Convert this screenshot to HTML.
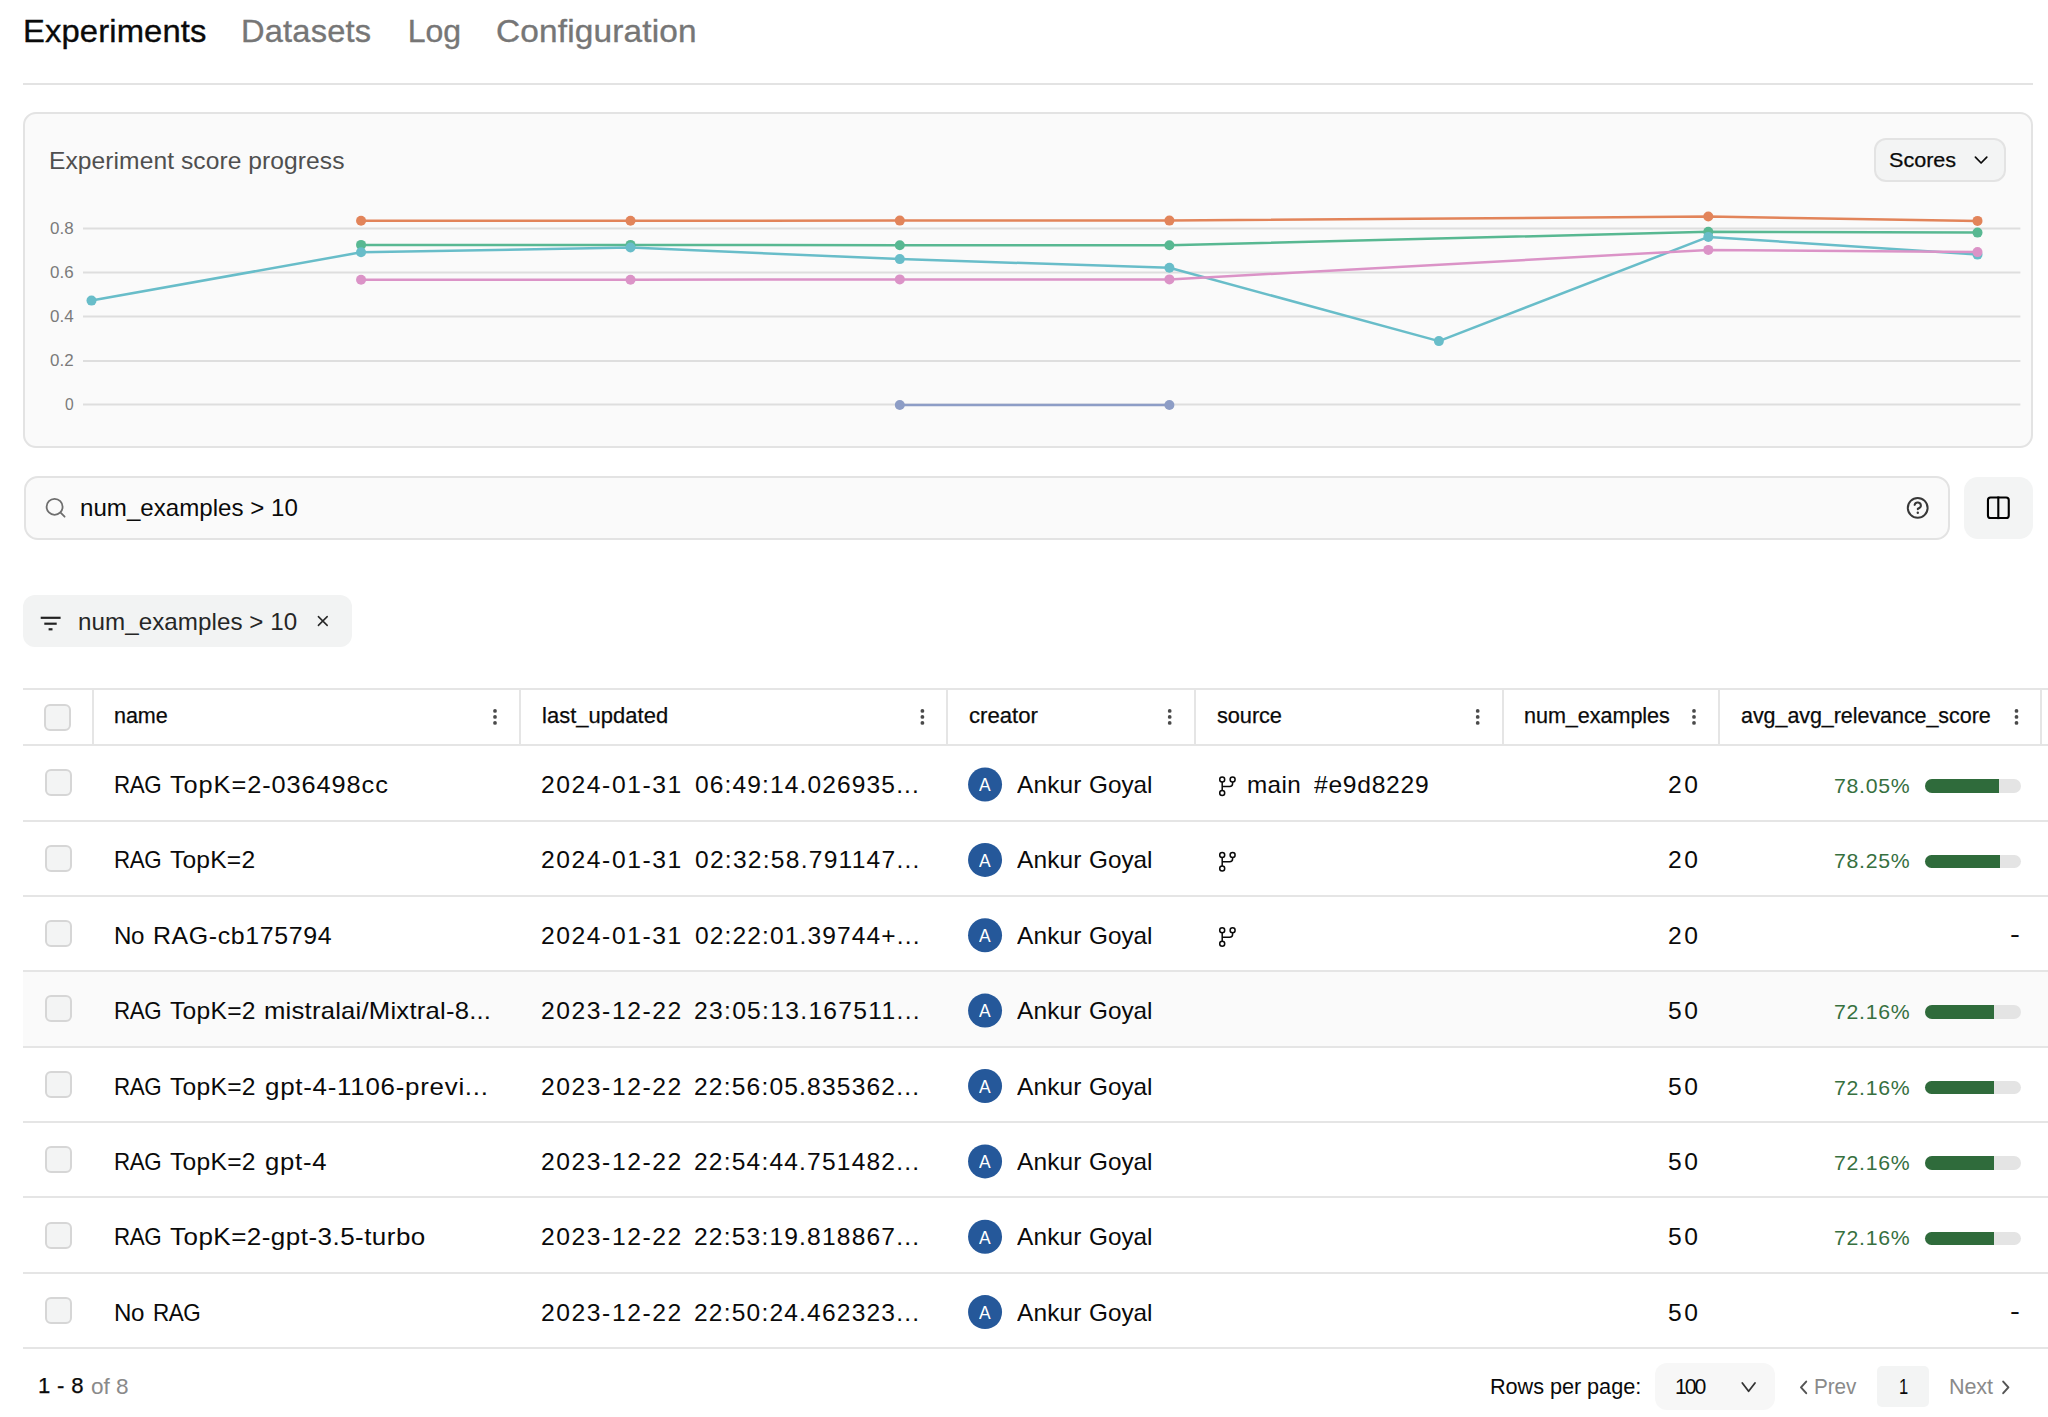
<!DOCTYPE html><html><head><meta charset="utf-8"><style>
html,body{margin:0;padding:0;background:#fff;width:2048px;height:1417px;overflow:hidden;position:relative}
.t{position:absolute;white-space:pre;font-family:'Liberation Sans',sans-serif}
div{box-sizing:border-box}
</style></head><body>
<div style="position:absolute;left:23px;top:83px;width:2010px;height:2px;background:#e3e3e3"></div>
<div style="position:absolute;left:23px;top:112px;width:2010px;height:335.5px;border:2px solid #e3e3e3;border-radius:13px;background:#fafafa"></div>
<div style="position:absolute;left:1873.7px;top:138.2px;width:132.8px;height:43.5px;border:2px solid #e3e3e3;border-radius:12px;background:#f3f4f4"></div>
<div style="position:absolute;left:23.5px;top:475.5px;width:1926.5px;height:64.7px;border:2px solid #e3e3e3;border-radius:14px;background:#fafafa"></div>
<div style="position:absolute;left:1964px;top:477px;width:68.5px;height:61.7px;border-radius:14px;background:#f3f4f4"></div>
<div style="position:absolute;left:23.2px;top:595px;width:328.6px;height:51.8px;border-radius:12px;background:#f2f3f3"></div>
<div style="position:absolute;left:23px;top:971.325px;width:2025px;height:75.38px;background:#fafafa"></div>
<div style="position:absolute;left:23px;top:687.6px;width:2025px;height:2.0px;background:#e5e5e5"></div>
<div style="position:absolute;left:23px;top:744.2px;width:2025px;height:2.0px;background:#e5e5e5"></div>
<div style="position:absolute;left:23px;top:819.58px;width:2025px;height:2.0px;background:#e5e5e5"></div>
<div style="position:absolute;left:23px;top:894.95px;width:2025px;height:2.0px;background:#e5e5e5"></div>
<div style="position:absolute;left:23px;top:970.33px;width:2025px;height:2.0px;background:#e5e5e5"></div>
<div style="position:absolute;left:23px;top:1045.7px;width:2025px;height:2.0px;background:#e5e5e5"></div>
<div style="position:absolute;left:23px;top:1121.08px;width:2025px;height:2.0px;background:#e5e5e5"></div>
<div style="position:absolute;left:23px;top:1196.45px;width:2025px;height:2.0px;background:#e5e5e5"></div>
<div style="position:absolute;left:23px;top:1271.83px;width:2025px;height:2.0px;background:#e5e5e5"></div>
<div style="position:absolute;left:23px;top:1347.2px;width:2025px;height:2.0px;background:#e5e5e5"></div>
<div style="position:absolute;left:91.6px;top:689.6px;width:2.0px;height:54.6px;background:#e5e5e5"></div>
<div style="position:absolute;left:519px;top:689.6px;width:2px;height:54.6px;background:#e5e5e5"></div>
<div style="position:absolute;left:946.3px;top:689.6px;width:2.0px;height:54.6px;background:#e5e5e5"></div>
<div style="position:absolute;left:1193.6px;top:689.6px;width:2.0px;height:54.6px;background:#e5e5e5"></div>
<div style="position:absolute;left:1501.6px;top:689.6px;width:2.0px;height:54.6px;background:#e5e5e5"></div>
<div style="position:absolute;left:1718.2px;top:689.6px;width:2.0px;height:54.6px;background:#e5e5e5"></div>
<div style="position:absolute;left:2040.3px;top:689.6px;width:2.0px;height:54.6px;background:#e5e5e5"></div>
<div style="position:absolute;left:44.1px;top:703.5px;width:27.0px;height:27.0px;border:2px solid #d6d6d6;border-radius:6px;background:#f3f4f4"></div>
<div style="position:absolute;left:44.8px;top:769.3px;width:27.0px;height:27.0px;border:2px solid #d6d6d6;border-radius:6px;background:#f3f4f4"></div>
<div style="position:absolute;left:44.8px;top:844.675px;width:27.0px;height:27.0px;border:2px solid #d6d6d6;border-radius:6px;background:#f3f4f4"></div>
<div style="position:absolute;left:44.8px;top:920.05px;width:27.0px;height:27.0px;border:2px solid #d6d6d6;border-radius:6px;background:#f3f4f4"></div>
<div style="position:absolute;left:44.8px;top:995.425px;width:27.0px;height:27.0px;border:2px solid #d6d6d6;border-radius:6px;background:#f3f4f4"></div>
<div style="position:absolute;left:44.8px;top:1070.8px;width:27.0px;height:27.0px;border:2px solid #d6d6d6;border-radius:6px;background:#f3f4f4"></div>
<div style="position:absolute;left:44.8px;top:1146.175px;width:27.0px;height:27.0px;border:2px solid #d6d6d6;border-radius:6px;background:#f3f4f4"></div>
<div style="position:absolute;left:44.8px;top:1221.55px;width:27.0px;height:27.0px;border:2px solid #d6d6d6;border-radius:6px;background:#f3f4f4"></div>
<div style="position:absolute;left:44.8px;top:1296.925px;width:27.0px;height:27.0px;border:2px solid #d6d6d6;border-radius:6px;background:#f3f4f4"></div>
<div style="position:absolute;left:1924.5px;top:779.3px;width:96.0px;height:13.6px;border-radius:7px;background:#e4e4e4;overflow:hidden"></div>
<div style="position:absolute;left:1924.5px;top:779.3px;width:74.93px;height:13.6px;border-radius:7px 0 0 7px;background:#2f6b3b"></div>
<div style="position:absolute;left:1924.5px;top:854.675px;width:96.0px;height:13.6px;border-radius:7px;background:#e4e4e4;overflow:hidden"></div>
<div style="position:absolute;left:1924.5px;top:854.675px;width:75.12px;height:13.6px;border-radius:7px 0 0 7px;background:#2f6b3b"></div>
<div style="position:absolute;left:1924.5px;top:1005.425px;width:96.0px;height:13.6px;border-radius:7px;background:#e4e4e4;overflow:hidden"></div>
<div style="position:absolute;left:1924.5px;top:1005.425px;width:69.27px;height:13.6px;border-radius:7px 0 0 7px;background:#2f6b3b"></div>
<div style="position:absolute;left:1924.5px;top:1080.8px;width:96.0px;height:13.6px;border-radius:7px;background:#e4e4e4;overflow:hidden"></div>
<div style="position:absolute;left:1924.5px;top:1080.8px;width:69.27px;height:13.6px;border-radius:7px 0 0 7px;background:#2f6b3b"></div>
<div style="position:absolute;left:1924.5px;top:1156.175px;width:96.0px;height:13.6px;border-radius:7px;background:#e4e4e4;overflow:hidden"></div>
<div style="position:absolute;left:1924.5px;top:1156.175px;width:69.27px;height:13.6px;border-radius:7px 0 0 7px;background:#2f6b3b"></div>
<div style="position:absolute;left:1924.5px;top:1231.55px;width:96.0px;height:13.6px;border-radius:7px;background:#e4e4e4;overflow:hidden"></div>
<div style="position:absolute;left:1924.5px;top:1231.55px;width:69.27px;height:13.6px;border-radius:7px 0 0 7px;background:#2f6b3b"></div>
<div style="position:absolute;left:1655.3px;top:1363.3px;width:120.2px;height:47.2px;border-radius:12px;background:#f7f7f7"></div>
<div style="position:absolute;left:1877.3px;top:1366px;width:51.7px;height:41px;border-radius:5px;background:#f3f4f4"></div>
<svg width="2048" height="1417" style="position:absolute;left:0;top:0">
<line x1="83" y1="228.4" x2="2020.4" y2="228.4" stroke="#dedede" stroke-width="2"/>
<line x1="83" y1="272.5" x2="2020.4" y2="272.5" stroke="#dedede" stroke-width="2"/>
<line x1="83" y1="316.5" x2="2020.4" y2="316.5" stroke="#dedede" stroke-width="2"/>
<line x1="83" y1="361.0" x2="2020.4" y2="361.0" stroke="#dedede" stroke-width="2"/>
<line x1="83" y1="404.4" x2="2020.4" y2="404.4" stroke="#dedede" stroke-width="2"/>
<polyline points="899.8,405.0 1169.4,405.0" fill="none" stroke="#8d9dc6" stroke-width="2.5" stroke-linejoin="round"/>
<circle cx="899.8" cy="405.0" r="5" fill="#8d9dc6"/>
<circle cx="1169.4" cy="405.0" r="5" fill="#8d9dc6"/>
<polyline points="361.05,220.8 630.5,220.8 899.8,220.6 1169.4,220.6 1708.3,216.5 1977.5,220.9" fill="none" stroke="#e2845a" stroke-width="2.5" stroke-linejoin="round"/>
<circle cx="361.05" cy="220.8" r="5" fill="#e2845a"/>
<circle cx="630.5" cy="220.8" r="5" fill="#e2845a"/>
<circle cx="899.8" cy="220.6" r="5" fill="#e2845a"/>
<circle cx="1169.4" cy="220.6" r="5" fill="#e2845a"/>
<circle cx="1708.3" cy="216.5" r="5" fill="#e2845a"/>
<circle cx="1977.5" cy="220.9" r="5" fill="#e2845a"/>
<polyline points="361.05,244.9 630.5,244.9 899.8,245.2 1169.4,245.2 1708.3,231.8 1977.5,232.6" fill="none" stroke="#58b892" stroke-width="2.5" stroke-linejoin="round"/>
<circle cx="361.05" cy="244.9" r="5" fill="#58b892"/>
<circle cx="630.5" cy="244.9" r="5" fill="#58b892"/>
<circle cx="899.8" cy="245.2" r="5" fill="#58b892"/>
<circle cx="1169.4" cy="245.2" r="5" fill="#58b892"/>
<circle cx="1708.3" cy="231.8" r="5" fill="#58b892"/>
<circle cx="1977.5" cy="232.6" r="5" fill="#58b892"/>
<polyline points="91.5,300.6 361.05,252.3 630.5,247.5 899.8,259.1 1169.4,267.8 1438.9,341.1 1708.3,236.9 1977.5,254.6" fill="none" stroke="#68bdc9" stroke-width="2.5" stroke-linejoin="round"/>
<circle cx="91.5" cy="300.6" r="5" fill="#68bdc9"/>
<circle cx="361.05" cy="252.3" r="5" fill="#68bdc9"/>
<circle cx="630.5" cy="247.5" r="5" fill="#68bdc9"/>
<circle cx="899.8" cy="259.1" r="5" fill="#68bdc9"/>
<circle cx="1169.4" cy="267.8" r="5" fill="#68bdc9"/>
<circle cx="1438.9" cy="341.1" r="5" fill="#68bdc9"/>
<circle cx="1708.3" cy="236.9" r="5" fill="#68bdc9"/>
<circle cx="1977.5" cy="254.6" r="5" fill="#68bdc9"/>
<polyline points="361.05,279.7 630.5,279.7 899.8,279.4 1169.4,279.4 1708.3,249.9 1977.5,252.1" fill="none" stroke="#db93c7" stroke-width="2.5" stroke-linejoin="round"/>
<circle cx="361.05" cy="279.7" r="5" fill="#db93c7"/>
<circle cx="630.5" cy="279.7" r="5" fill="#db93c7"/>
<circle cx="899.8" cy="279.4" r="5" fill="#db93c7"/>
<circle cx="1169.4" cy="279.4" r="5" fill="#db93c7"/>
<circle cx="1708.3" cy="249.9" r="5" fill="#db93c7"/>
<circle cx="1977.5" cy="252.1" r="5" fill="#db93c7"/>
<polyline points="1975.4,157.2 1981.1,163 1986.8,157.2" fill="none" stroke="#0a0a0a" stroke-width="1.7" stroke-linecap="round" stroke-linejoin="round"/>
<circle cx="54.6" cy="506.8" r="8" fill="none" stroke="#6e6e6e" stroke-width="1.8"/>
<line x1="60.6" y1="512.6" x2="64.6" y2="516.7" stroke="#6e6e6e" stroke-width="1.8" stroke-linecap="round"/>
<circle cx="1917.7" cy="507.9" r="9.9" fill="none" stroke="#383838" stroke-width="2"/>
<path d="M1914.6,504.9 a3.2,3.2 0 0 1 6.3,0.9 c0,2 -3.1,2.9 -3.1,2.9 v0.6" fill="none" stroke="#383838" stroke-width="2" stroke-linecap="round" stroke-linejoin="round"/>
<circle cx="1917.8" cy="512.8" r="1.2" fill="#383838"/>
<rect x="1987.95" y="497.45" width="20.8" height="20.6" rx="2.6" fill="none" stroke="#000" stroke-width="2.1"/>
<line x1="1998.3" y1="496.5" x2="1998.3" y2="519.1" stroke="#000" stroke-width="2.1"/>
<line x1="40.699999999999996" y1="617.8" x2="60.6" y2="617.8" stroke="#222" stroke-width="2.2" stroke-linecap="butt"/>
<line x1="44.3" y1="623.7" x2="56.7" y2="623.7" stroke="#222" stroke-width="2.2" stroke-linecap="butt"/>
<line x1="48.599999999999994" y1="629.3" x2="52.5" y2="629.3" stroke="#222" stroke-width="2.2" stroke-linecap="butt"/>
<path d="M318.4,616.6 L327.2,625.4 M327.2,616.6 L318.4,625.4" stroke="#262626" stroke-width="1.5" stroke-linecap="round"/>
<circle cx="495" cy="710.9" r="1.9" fill="#4a4a4a"/>
<circle cx="495" cy="716.9" r="1.9" fill="#4a4a4a"/>
<circle cx="495" cy="722.9" r="1.9" fill="#4a4a4a"/>
<circle cx="922.4" cy="710.9" r="1.9" fill="#4a4a4a"/>
<circle cx="922.4" cy="716.9" r="1.9" fill="#4a4a4a"/>
<circle cx="922.4" cy="722.9" r="1.9" fill="#4a4a4a"/>
<circle cx="1169.7" cy="710.9" r="1.9" fill="#4a4a4a"/>
<circle cx="1169.7" cy="716.9" r="1.9" fill="#4a4a4a"/>
<circle cx="1169.7" cy="722.9" r="1.9" fill="#4a4a4a"/>
<circle cx="1477.7" cy="710.9" r="1.9" fill="#4a4a4a"/>
<circle cx="1477.7" cy="716.9" r="1.9" fill="#4a4a4a"/>
<circle cx="1477.7" cy="722.9" r="1.9" fill="#4a4a4a"/>
<circle cx="1694" cy="710.9" r="1.9" fill="#4a4a4a"/>
<circle cx="1694" cy="716.9" r="1.9" fill="#4a4a4a"/>
<circle cx="1694" cy="722.9" r="1.9" fill="#4a4a4a"/>
<circle cx="2016.5" cy="710.9" r="1.9" fill="#4a4a4a"/>
<circle cx="2016.5" cy="716.9" r="1.9" fill="#4a4a4a"/>
<circle cx="2016.5" cy="722.9" r="1.9" fill="#4a4a4a"/>
<circle cx="985.05" cy="784.5" r="17" fill="#25589a"/>
<circle cx="985.05" cy="859.88" r="17" fill="#25589a"/>
<circle cx="985.05" cy="935.25" r="17" fill="#25589a"/>
<circle cx="985.05" cy="1010.62" r="17" fill="#25589a"/>
<circle cx="985.05" cy="1086.0" r="17" fill="#25589a"/>
<circle cx="985.05" cy="1161.38" r="17" fill="#25589a"/>
<circle cx="985.05" cy="1236.75" r="17" fill="#25589a"/>
<circle cx="985.05" cy="1312.12" r="17" fill="#25589a"/>
<g transform="translate(0,0.0)" fill="none" stroke="#0a0a0a" stroke-width="1.5"><circle cx="1222.2" cy="779.5" r="2.5"/><circle cx="1232.6" cy="779.5" r="2.5"/><circle cx="1222.2" cy="793.1" r="2.5"/><path d="M1222.2,782 V790.6 M1222.2,786.4 H1229.6 Q1232.6,786.4 1232.6,783.4 V782"/></g>
<g transform="translate(0,75.38)" fill="none" stroke="#0a0a0a" stroke-width="1.5"><circle cx="1222.2" cy="779.5" r="2.5"/><circle cx="1232.6" cy="779.5" r="2.5"/><circle cx="1222.2" cy="793.1" r="2.5"/><path d="M1222.2,782 V790.6 M1222.2,786.4 H1229.6 Q1232.6,786.4 1232.6,783.4 V782"/></g>
<g transform="translate(0,150.75)" fill="none" stroke="#0a0a0a" stroke-width="1.5"><circle cx="1222.2" cy="779.5" r="2.5"/><circle cx="1232.6" cy="779.5" r="2.5"/><circle cx="1222.2" cy="793.1" r="2.5"/><path d="M1222.2,782 V790.6 M1222.2,786.4 H1229.6 Q1232.6,786.4 1232.6,783.4 V782"/></g>
<polyline points="1742.3,1383 1748.6,1391.2 1755,1383" fill="none" stroke="#333" stroke-width="1.8" stroke-linecap="round" stroke-linejoin="round"/>
<polyline points="1806.2,1381.6 1801,1387.4 1806.2,1393.2" fill="none" stroke="#555" stroke-width="2" stroke-linecap="round" stroke-linejoin="round"/>
<polyline points="2003.2,1381.6 2008.4,1387.4 2003.2,1393.2" fill="none" stroke="#555" stroke-width="2" stroke-linecap="round" stroke-linejoin="round"/>
</svg>
<span class="t" style="left:22.6px;top:15.0px;font-size:32px;line-height:32px;color:#0a0a0a;letter-spacing:0.117px;transform-origin:0 0;transform:scaleX(1.0245);-webkit-text-stroke:0.35px currentColor;">Experiments</span>
<span class="t" style="left:241.1px;top:14.8px;font-size:32px;line-height:32px;color:#767676;letter-spacing:0.182px;transform-origin:0 0;transform:scaleX(1.0198);-webkit-text-stroke:0.35px currentColor;">Datasets</span>
<span class="t" style="left:407.7px;top:14.8px;font-size:32px;line-height:32px;color:#767676;letter-spacing:0.0px;transform-origin:0 0;transform:scaleX(1.0);-webkit-text-stroke:0.35px currentColor;">Log</span>
<span class="t" style="left:496.3px;top:14.8px;font-size:32px;line-height:32px;color:#767676;letter-spacing:0.152px;transform-origin:0 0;transform:scaleX(1.0436);-webkit-text-stroke:0.35px currentColor;">Configuration</span>
<span class="t" style="left:49.4px;top:148.9px;font-size:24px;line-height:24px;color:#4f4f4f;letter-spacing:0.073px;transform-origin:0 0;transform:scaleX(1.024);">Experiment score progress</span>
<span class="t" style="left:1889.0px;top:148.9px;font-size:21px;line-height:21px;color:#0a0a0a;letter-spacing:-0.02px;transform-origin:0 0;transform:scaleX(1.0286);-webkit-text-stroke:0.25px currentColor;">Scores</span>
<span class="t" style="left:49.6px;top:219.9px;font-size:17px;line-height:17px;color:#7a7a7a;letter-spacing:0.051px;transform-origin:0 0;transform:scaleX(0.9975);">0.8</span>
<span class="t" style="left:49.6px;top:263.9px;font-size:17px;line-height:17px;color:#7a7a7a;letter-spacing:0.051px;transform-origin:0 0;transform:scaleX(0.9975);">0.6</span>
<span class="t" style="left:49.6px;top:307.9px;font-size:17px;line-height:17px;color:#7a7a7a;letter-spacing:0.051px;transform-origin:0 0;transform:scaleX(0.9975);">0.4</span>
<span class="t" style="left:49.6px;top:352.1px;font-size:17px;line-height:17px;color:#7a7a7a;letter-spacing:0.051px;transform-origin:0 0;transform:scaleX(0.9975);">0.2</span>
<span class="t" style="left:64.8px;top:395.9px;font-size:17px;line-height:17px;color:#7a7a7a;letter-spacing:0.0px;transform-origin:0 0;transform:scaleX(0.9174);">0</span>
<span class="t" style="left:79.6px;top:496.3px;font-size:24px;line-height:24px;color:#0a0a0a;letter-spacing:0.018px;transform-origin:0 0;transform:scaleX(1.0036);">num_examples &gt; 10</span>
<span class="t" style="left:77.6px;top:609.6px;font-size:24px;line-height:24px;color:#262626;letter-spacing:0.062px;transform-origin:0 0;transform:scaleX(1.0065);">num_examples &gt; 10</span>
<span class="t" style="left:113.8px;top:705.1px;font-size:22px;line-height:22px;color:#0a0a0a;letter-spacing:-0.068px;transform-origin:0 0;transform:scaleX(0.9792);-webkit-text-stroke:0.25px currentColor;">name</span>
<span class="t" style="left:541.5px;top:705.1px;font-size:22px;line-height:22px;color:#0a0a0a;letter-spacing:0.046px;transform-origin:0 0;transform:scaleX(0.9968);-webkit-text-stroke:0.25px currentColor;">last_updated</span>
<span class="t" style="left:969.0px;top:705.1px;font-size:22px;line-height:22px;color:#0a0a0a;letter-spacing:0.032px;transform-origin:0 0;transform:scaleX(1.0046);-webkit-text-stroke:0.25px currentColor;">creator</span>
<span class="t" style="left:1217.3px;top:705.1px;font-size:22px;line-height:22px;color:#0a0a0a;letter-spacing:-0.082px;transform-origin:0 0;transform:scaleX(0.9903);-webkit-text-stroke:0.25px currentColor;">source</span>
<span class="t" style="left:1523.5px;top:705.1px;font-size:22px;line-height:22px;color:#0a0a0a;letter-spacing:-0.046px;transform-origin:0 0;transform:scaleX(0.981);-webkit-text-stroke:0.25px currentColor;">num_examples</span>
<span class="t" style="left:1741.4px;top:705.1px;font-size:22px;line-height:22px;color:#0a0a0a;letter-spacing:-0.056px;transform-origin:0 0;transform:scaleX(0.9769);-webkit-text-stroke:0.25px currentColor;">avg_avg_relevance_score</span>
<span class="t" style="left:113.8px;top:773.1px;font-size:24px;line-height:24px;color:#0a0a0a;letter-spacing:-0.483px;transform-origin:0 0;transform:scaleX(0.9306);">RAG</span>
<span class="t" style="left:169.8px;top:773.1px;font-size:24px;line-height:24px;color:#0a0a0a;letter-spacing:0.872px;transform-origin:0 0;transform:scaleX(1.0556);">TopK=2-036498cc</span>
<span class="t" style="left:541.1px;top:773.1px;font-size:24px;line-height:24px;color:#0a0a0a;letter-spacing:1.513px;transform-origin:0 0;transform:scaleX(1.0281);">2024-01-31</span>
<span class="t" style="left:694.7px;top:773.1px;font-size:24px;line-height:24px;color:#0a0a0a;letter-spacing:1.099px;transform-origin:0 0;transform:scaleX(1.0228);">06:49:14.026935...</span>
<span class="t" style="left:1016.5px;top:773.1px;font-size:24px;line-height:24px;color:#0a0a0a;letter-spacing:0.123px;transform-origin:0 0;transform:scaleX(1.019);">Ankur</span>
<span class="t" style="left:1088.5px;top:773.1px;font-size:24px;line-height:24px;color:#0a0a0a;letter-spacing:0.0px;transform-origin:0 0;transform:scaleX(1.0131);">Goyal</span>
<span class="t" style="left:979.0px;top:776.3px;font-size:18px;line-height:18px;color:#ffffff;letter-spacing:0.0px;transform-origin:0 0;transform:scaleX(0.9687);">A</span>
<span class="t" style="left:1246.5px;top:773.1px;font-size:24px;line-height:24px;color:#0a0a0a;letter-spacing:0.363px;transform-origin:0 0;transform:scaleX(1.011);">main</span>
<span class="t" style="left:1313.9px;top:773.1px;font-size:24px;line-height:24px;color:#0a0a0a;letter-spacing:0.71px;transform-origin:0 0;transform:scaleX(1.0261);">#e9d8229</span>
<span class="t" style="left:1667.9px;top:773.1px;font-size:24px;line-height:24px;color:#0a0a0a;letter-spacing:2.435px;transform-origin:0 0;transform:scaleX(1.0266);">20</span>
<span class="t" style="left:1833.8px;top:775.1px;font-size:21px;line-height:21px;color:#37703f;letter-spacing:0.691px;transform-origin:0 0;transform:scaleX(1.0125);">78.05%</span>
<span class="t" style="left:113.8px;top:848.48px;font-size:24px;line-height:24px;color:#0a0a0a;letter-spacing:-0.483px;transform-origin:0 0;transform:scaleX(0.9306);">RAG</span>
<span class="t" style="left:169.8px;top:848.48px;font-size:24px;line-height:24px;color:#0a0a0a;letter-spacing:0.195px;transform-origin:0 0;transform:scaleX(1.0247);">TopK=2</span>
<span class="t" style="left:541.1px;top:848.48px;font-size:24px;line-height:24px;color:#0a0a0a;letter-spacing:1.513px;transform-origin:0 0;transform:scaleX(1.0281);">2024-01-31</span>
<span class="t" style="left:694.7px;top:848.48px;font-size:24px;line-height:24px;color:#0a0a0a;letter-spacing:1.211px;transform-origin:0 0;transform:scaleX(1.0248);">02:32:58.791147...</span>
<span class="t" style="left:1016.5px;top:848.48px;font-size:24px;line-height:24px;color:#0a0a0a;letter-spacing:0.123px;transform-origin:0 0;transform:scaleX(1.019);">Ankur</span>
<span class="t" style="left:1088.5px;top:848.48px;font-size:24px;line-height:24px;color:#0a0a0a;letter-spacing:0.0px;transform-origin:0 0;transform:scaleX(1.0131);">Goyal</span>
<span class="t" style="left:979.0px;top:851.68px;font-size:18px;line-height:18px;color:#ffffff;letter-spacing:0.0px;transform-origin:0 0;transform:scaleX(0.9687);">A</span>
<span class="t" style="left:1667.9px;top:848.48px;font-size:24px;line-height:24px;color:#0a0a0a;letter-spacing:2.435px;transform-origin:0 0;transform:scaleX(1.0266);">20</span>
<span class="t" style="left:1833.8px;top:850.48px;font-size:21px;line-height:21px;color:#37703f;letter-spacing:0.691px;transform-origin:0 0;transform:scaleX(1.0125);">78.25%</span>
<span class="t" style="left:114.0px;top:923.85px;font-size:24px;line-height:24px;color:#0a0a0a;letter-spacing:-0.398px;transform-origin:0 0;transform:scaleX(1.0055);">No</span>
<span class="t" style="left:153.1px;top:923.85px;font-size:24px;line-height:24px;color:#0a0a0a;letter-spacing:0.596px;transform-origin:0 0;transform:scaleX(1.0384);">RAG-cb175794</span>
<span class="t" style="left:541.1px;top:923.85px;font-size:24px;line-height:24px;color:#0a0a0a;letter-spacing:1.513px;transform-origin:0 0;transform:scaleX(1.0281);">2024-01-31</span>
<span class="t" style="left:694.7px;top:923.85px;font-size:24px;line-height:24px;color:#0a0a0a;letter-spacing:1.098px;transform-origin:0 0;transform:scaleX(1.0228);">02:22:01.39744+...</span>
<span class="t" style="left:1016.5px;top:923.85px;font-size:24px;line-height:24px;color:#0a0a0a;letter-spacing:0.123px;transform-origin:0 0;transform:scaleX(1.019);">Ankur</span>
<span class="t" style="left:1088.5px;top:923.85px;font-size:24px;line-height:24px;color:#0a0a0a;letter-spacing:0.0px;transform-origin:0 0;transform:scaleX(1.0131);">Goyal</span>
<span class="t" style="left:979.0px;top:927.05px;font-size:18px;line-height:18px;color:#ffffff;letter-spacing:0.0px;transform-origin:0 0;transform:scaleX(0.9687);">A</span>
<span class="t" style="left:1667.9px;top:923.85px;font-size:24px;line-height:24px;color:#0a0a0a;letter-spacing:2.435px;transform-origin:0 0;transform:scaleX(1.0266);">20</span>
<span class="t" style="left:2009.7px;top:922.05px;font-size:24px;line-height:24px;color:#0a0a0a;letter-spacing:0.0px;transform-origin:0 0;transform:scaleX(1.2354);">-</span>
<span class="t" style="left:113.8px;top:999.22px;font-size:24px;line-height:24px;color:#0a0a0a;letter-spacing:-0.483px;transform-origin:0 0;transform:scaleX(0.9306);">RAG</span>
<span class="t" style="left:169.8px;top:999.22px;font-size:24px;line-height:24px;color:#0a0a0a;letter-spacing:0.255px;transform-origin:0 0;transform:scaleX(1.0256);">TopK=2</span>
<span class="t" style="left:264.2px;top:999.22px;font-size:24px;line-height:24px;color:#0a0a0a;letter-spacing:0.19px;transform-origin:0 0;transform:scaleX(1.0705);">mistralai/Mixtral-8...</span>
<span class="t" style="left:541.1px;top:999.22px;font-size:24px;line-height:24px;color:#0a0a0a;letter-spacing:1.513px;transform-origin:0 0;transform:scaleX(1.0281);">2023-12-22</span>
<span class="t" style="left:693.7px;top:999.22px;font-size:24px;line-height:24px;color:#0a0a0a;letter-spacing:1.267px;transform-origin:0 0;transform:scaleX(1.0259);">23:05:13.167511...</span>
<span class="t" style="left:1016.5px;top:999.22px;font-size:24px;line-height:24px;color:#0a0a0a;letter-spacing:0.123px;transform-origin:0 0;transform:scaleX(1.019);">Ankur</span>
<span class="t" style="left:1088.5px;top:999.22px;font-size:24px;line-height:24px;color:#0a0a0a;letter-spacing:0.0px;transform-origin:0 0;transform:scaleX(1.0131);">Goyal</span>
<span class="t" style="left:979.0px;top:1002.42px;font-size:18px;line-height:18px;color:#ffffff;letter-spacing:0.0px;transform-origin:0 0;transform:scaleX(0.9687);">A</span>
<span class="t" style="left:1667.9px;top:999.22px;font-size:24px;line-height:24px;color:#0a0a0a;letter-spacing:2.435px;transform-origin:0 0;transform:scaleX(1.0266);">50</span>
<span class="t" style="left:1833.8px;top:1001.22px;font-size:21px;line-height:21px;color:#37703f;letter-spacing:0.691px;transform-origin:0 0;transform:scaleX(1.0125);">72.16%</span>
<span class="t" style="left:113.8px;top:1074.6px;font-size:24px;line-height:24px;color:#0a0a0a;letter-spacing:-0.483px;transform-origin:0 0;transform:scaleX(0.9306);">RAG</span>
<span class="t" style="left:169.8px;top:1074.6px;font-size:24px;line-height:24px;color:#0a0a0a;letter-spacing:0.255px;transform-origin:0 0;transform:scaleX(1.0256);">TopK=2</span>
<span class="t" style="left:265.2px;top:1074.6px;font-size:24px;line-height:24px;color:#0a0a0a;letter-spacing:0.669px;transform-origin:0 0;transform:scaleX(1.0802);">gpt-4-1106-previ...</span>
<span class="t" style="left:541.1px;top:1074.6px;font-size:24px;line-height:24px;color:#0a0a0a;letter-spacing:1.513px;transform-origin:0 0;transform:scaleX(1.0281);">2023-12-22</span>
<span class="t" style="left:693.7px;top:1074.6px;font-size:24px;line-height:24px;color:#0a0a0a;letter-spacing:1.155px;transform-origin:0 0;transform:scaleX(1.0238);">22:56:05.835362...</span>
<span class="t" style="left:1016.5px;top:1074.6px;font-size:24px;line-height:24px;color:#0a0a0a;letter-spacing:0.123px;transform-origin:0 0;transform:scaleX(1.019);">Ankur</span>
<span class="t" style="left:1088.5px;top:1074.6px;font-size:24px;line-height:24px;color:#0a0a0a;letter-spacing:0.0px;transform-origin:0 0;transform:scaleX(1.0131);">Goyal</span>
<span class="t" style="left:979.0px;top:1077.8px;font-size:18px;line-height:18px;color:#ffffff;letter-spacing:0.0px;transform-origin:0 0;transform:scaleX(0.9687);">A</span>
<span class="t" style="left:1667.9px;top:1074.6px;font-size:24px;line-height:24px;color:#0a0a0a;letter-spacing:2.435px;transform-origin:0 0;transform:scaleX(1.0266);">50</span>
<span class="t" style="left:1833.8px;top:1076.6px;font-size:21px;line-height:21px;color:#37703f;letter-spacing:0.691px;transform-origin:0 0;transform:scaleX(1.0125);">72.16%</span>
<span class="t" style="left:113.8px;top:1149.97px;font-size:24px;line-height:24px;color:#0a0a0a;letter-spacing:-0.483px;transform-origin:0 0;transform:scaleX(0.9306);">RAG</span>
<span class="t" style="left:169.8px;top:1149.97px;font-size:24px;line-height:24px;color:#0a0a0a;letter-spacing:0.255px;transform-origin:0 0;transform:scaleX(1.0256);">TopK=2</span>
<span class="t" style="left:265.2px;top:1149.97px;font-size:24px;line-height:24px;color:#0a0a0a;letter-spacing:0.701px;transform-origin:0 0;transform:scaleX(1.0696);">gpt-4</span>
<span class="t" style="left:541.1px;top:1149.97px;font-size:24px;line-height:24px;color:#0a0a0a;letter-spacing:1.513px;transform-origin:0 0;transform:scaleX(1.0281);">2023-12-22</span>
<span class="t" style="left:693.7px;top:1149.97px;font-size:24px;line-height:24px;color:#0a0a0a;letter-spacing:1.155px;transform-origin:0 0;transform:scaleX(1.0238);">22:54:44.751482...</span>
<span class="t" style="left:1016.5px;top:1149.97px;font-size:24px;line-height:24px;color:#0a0a0a;letter-spacing:0.123px;transform-origin:0 0;transform:scaleX(1.019);">Ankur</span>
<span class="t" style="left:1088.5px;top:1149.97px;font-size:24px;line-height:24px;color:#0a0a0a;letter-spacing:0.0px;transform-origin:0 0;transform:scaleX(1.0131);">Goyal</span>
<span class="t" style="left:979.0px;top:1153.18px;font-size:18px;line-height:18px;color:#ffffff;letter-spacing:0.0px;transform-origin:0 0;transform:scaleX(0.9687);">A</span>
<span class="t" style="left:1667.9px;top:1149.97px;font-size:24px;line-height:24px;color:#0a0a0a;letter-spacing:2.435px;transform-origin:0 0;transform:scaleX(1.0266);">50</span>
<span class="t" style="left:1833.8px;top:1151.97px;font-size:21px;line-height:21px;color:#37703f;letter-spacing:0.691px;transform-origin:0 0;transform:scaleX(1.0125);">72.16%</span>
<span class="t" style="left:113.8px;top:1225.35px;font-size:24px;line-height:24px;color:#0a0a0a;letter-spacing:-0.483px;transform-origin:0 0;transform:scaleX(0.9306);">RAG</span>
<span class="t" style="left:169.8px;top:1225.35px;font-size:24px;line-height:24px;color:#0a0a0a;letter-spacing:0.433px;transform-origin:0 0;transform:scaleX(1.0832);">TopK=2-gpt-3.5-turbo</span>
<span class="t" style="left:541.1px;top:1225.35px;font-size:24px;line-height:24px;color:#0a0a0a;letter-spacing:1.513px;transform-origin:0 0;transform:scaleX(1.0281);">2023-12-22</span>
<span class="t" style="left:693.7px;top:1225.35px;font-size:24px;line-height:24px;color:#0a0a0a;letter-spacing:1.155px;transform-origin:0 0;transform:scaleX(1.0238);">22:53:19.818867...</span>
<span class="t" style="left:1016.5px;top:1225.35px;font-size:24px;line-height:24px;color:#0a0a0a;letter-spacing:0.123px;transform-origin:0 0;transform:scaleX(1.019);">Ankur</span>
<span class="t" style="left:1088.5px;top:1225.35px;font-size:24px;line-height:24px;color:#0a0a0a;letter-spacing:0.0px;transform-origin:0 0;transform:scaleX(1.0131);">Goyal</span>
<span class="t" style="left:979.0px;top:1228.55px;font-size:18px;line-height:18px;color:#ffffff;letter-spacing:0.0px;transform-origin:0 0;transform:scaleX(0.9687);">A</span>
<span class="t" style="left:1667.9px;top:1225.35px;font-size:24px;line-height:24px;color:#0a0a0a;letter-spacing:2.435px;transform-origin:0 0;transform:scaleX(1.0266);">50</span>
<span class="t" style="left:1833.8px;top:1227.35px;font-size:21px;line-height:21px;color:#37703f;letter-spacing:0.691px;transform-origin:0 0;transform:scaleX(1.0125);">72.16%</span>
<span class="t" style="left:114.0px;top:1300.72px;font-size:24px;line-height:24px;color:#0a0a0a;letter-spacing:-0.398px;transform-origin:0 0;transform:scaleX(1.0055);">No</span>
<span class="t" style="left:153.1px;top:1300.72px;font-size:24px;line-height:24px;color:#0a0a0a;letter-spacing:-0.534px;transform-origin:0 0;transform:scaleX(0.9355);">RAG</span>
<span class="t" style="left:541.1px;top:1300.72px;font-size:24px;line-height:24px;color:#0a0a0a;letter-spacing:1.513px;transform-origin:0 0;transform:scaleX(1.0281);">2023-12-22</span>
<span class="t" style="left:693.7px;top:1300.72px;font-size:24px;line-height:24px;color:#0a0a0a;letter-spacing:1.155px;transform-origin:0 0;transform:scaleX(1.0238);">22:50:24.462323...</span>
<span class="t" style="left:1016.5px;top:1300.72px;font-size:24px;line-height:24px;color:#0a0a0a;letter-spacing:0.123px;transform-origin:0 0;transform:scaleX(1.019);">Ankur</span>
<span class="t" style="left:1088.5px;top:1300.72px;font-size:24px;line-height:24px;color:#0a0a0a;letter-spacing:0.0px;transform-origin:0 0;transform:scaleX(1.0131);">Goyal</span>
<span class="t" style="left:979.0px;top:1303.92px;font-size:18px;line-height:18px;color:#ffffff;letter-spacing:0.0px;transform-origin:0 0;transform:scaleX(0.9687);">A</span>
<span class="t" style="left:1667.9px;top:1300.72px;font-size:24px;line-height:24px;color:#0a0a0a;letter-spacing:2.435px;transform-origin:0 0;transform:scaleX(1.0266);">50</span>
<span class="t" style="left:2009.7px;top:1298.92px;font-size:24px;line-height:24px;color:#0a0a0a;letter-spacing:0.0px;transform-origin:0 0;transform:scaleX(1.2354);">-</span>
<span class="t" style="left:38.3px;top:1375.0px;font-size:22px;line-height:22px;color:#0a0a0a;letter-spacing:0.298px;transform-origin:0 0;transform:scaleX(1.0064);-webkit-text-stroke:0.25px currentColor;">1 - 8</span>
<span class="t" style="left:90.6px;top:1376.0px;font-size:22px;line-height:22px;color:#8a8a8a;letter-spacing:-0.065px;transform-origin:0 0;transform:scaleX(1.0264);">of 8</span>
<span class="t" style="left:1490.0px;top:1376.2px;font-size:22px;line-height:22px;color:#0a0a0a;letter-spacing:-0.063px;transform-origin:0 0;transform:scaleX(0.9863);">Rows per page:</span>
<span class="t" style="left:1675.0px;top:1376.2px;font-size:22px;line-height:22px;color:#0a0a0a;letter-spacing:-2.122px;transform-origin:0 0;transform:scaleX(0.9661);">100</span>
<span class="t" style="left:1813.7px;top:1376.2px;font-size:22px;line-height:22px;color:#8a8a8a;letter-spacing:-0.071px;transform-origin:0 0;transform:scaleX(0.9391);">Prev</span>
<span class="t" style="left:1898.6px;top:1376.2px;font-size:22px;line-height:22px;color:#0a0a0a;letter-spacing:0.0px;transform-origin:0 0;transform:scaleX(0.7506);">1</span>
<span class="t" style="left:1948.8px;top:1376.2px;font-size:22px;line-height:22px;color:#8a8a8a;letter-spacing:-0.102px;transform-origin:0 0;transform:scaleX(0.9804);">Next</span>
</body></html>
